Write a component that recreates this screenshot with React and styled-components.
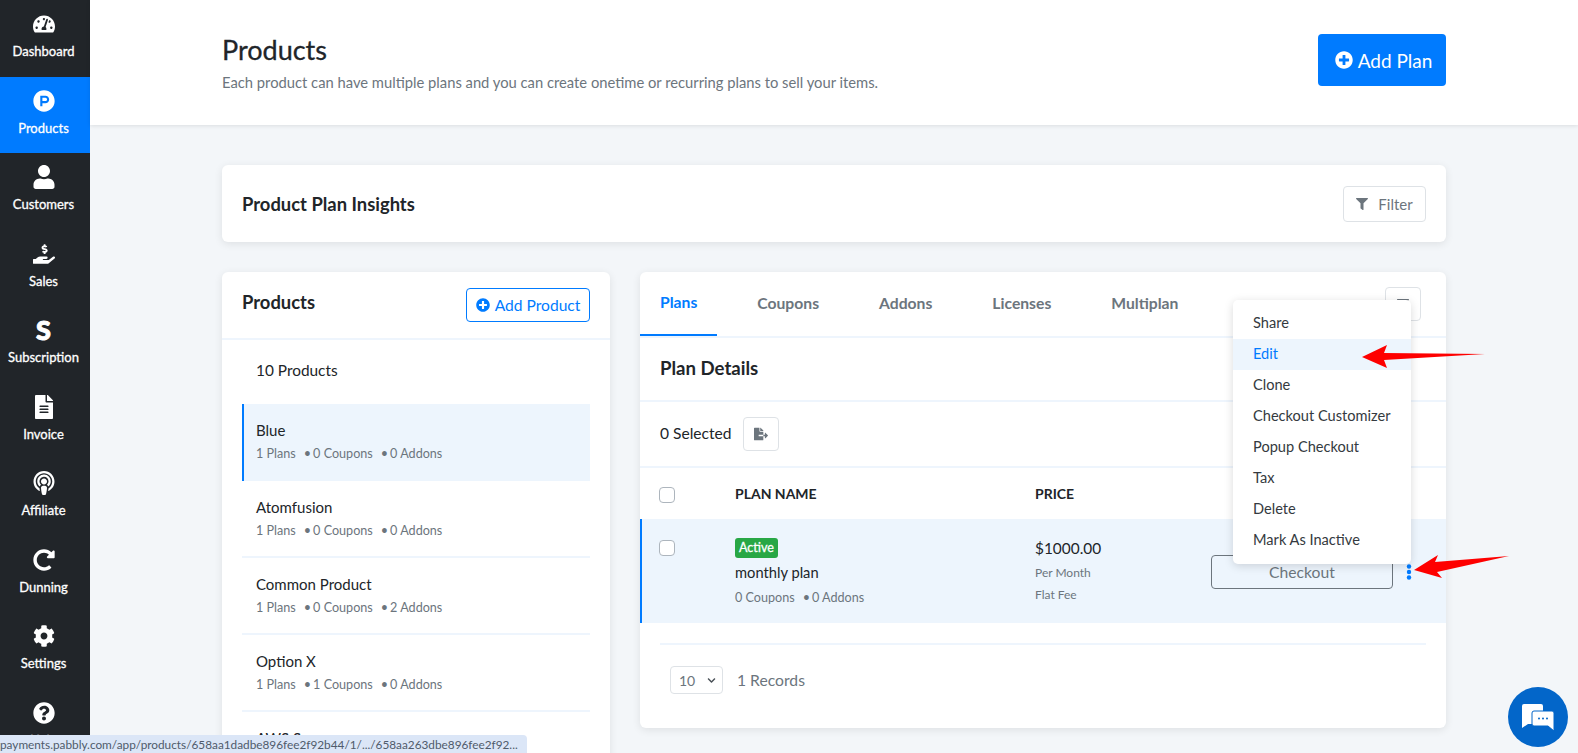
import React from "react";
import styled, { createGlobalStyle } from "styled-components";
import {
  FaTachometerAlt,
  FaProductHunt,
  FaUser,
  FaHandHoldingUsd,
  FaFileAlt,
  FaPodcast,
  FaRedoAlt,
  FaCog,
  FaQuestionCircle,
  FaPlusCircle,
  FaFilter,
  FaFileExport,
  FaChevronDown,
} from "react-icons/fa";

const GlobalStyle = createGlobalStyle`
  html, body {
    margin: 0;
    padding: 0;
    height: 100%;
    overflow: hidden;
    background: #f3f6f9;
    font-family: "Lato", "Liberation Sans", sans-serif;
    color: #212529;
  }
  * { box-sizing: border-box; }
`;

const Layout = styled.div`
  position: relative;
  display: flex;
  width: 1578px;
  height: 753px;
  overflow: hidden;
`;

const Sidebar = styled.nav`
  flex: 0 0 90px;
  height: 100%;
  background: #212529;
  display: flex;
  flex-direction: column;
`;

const NavItem = styled.div`
  flex: 0 0 76.5px;
  display: flex;
  flex-direction: column;
  align-items: center;
  padding: 12px 3px 0 0;
  gap: 7px;
  color: #fff;
  font-size: 13px;
  -webkit-text-stroke: 0.3px #fff;
  background: ${(p) => (p.$active ? "#007bff" : "transparent")};
  svg { font-size: 22px; height: 24px; }
`;

const SubscriptionGlyph = styled.span`
  font-size: 27px;
  line-height: 24px;
  height: 24px;
  font-weight: 900;
  -webkit-text-stroke: 1px #fff;
`;

const Main = styled.main`
  flex: 1;
  min-width: 0;
  display: flex;
  flex-direction: column;
`;

const PageHeader = styled.header`
  flex: 0 0 125px;
  background: #fff;
  box-shadow: 0 1px 4px rgba(0, 0, 0, 0.1);
  padding: 34px 132px 0;
  display: flex;
  justify-content: space-between;
  align-items: flex-start;
`;

const PageTitle = styled.h1`
  margin: 0 0 7px;
  font-size: 27px;
  line-height: 32px;
  font-weight: 400;
  -webkit-text-stroke: 0.3px #212529;
`;

const PageSub = styled.p`
  margin: 0;
  font-size: 14.75px;
  line-height: 18px;
  color: #6c757d;
`;

const PrimaryButton = styled.button`
  width: 128px;
  height: 52px;
  padding-right: 3px;
  border: 0;
  border-radius: 4px;
  background: #007bff;
  color: #fff;
  font: 400 19px "Lato", sans-serif;
  display: flex;
  align-items: center;
  justify-content: center;
  gap: 5px;
`;

const Content = styled.div`
  padding: 40px 132px 0;
  display: flex;
  flex-direction: column;
  gap: 30px;
`;

const Card = styled.section`
  background: #fff;
  border-radius: 6px;
  box-shadow: 0 2px 8px rgba(0, 0, 0, 0.09);
`;

const InsightsCard = styled(Card)`
  height: 77px;
  padding: 0 20px;
  display: flex;
  align-items: center;
  justify-content: space-between;
`;

const CardTitle = styled.h2`
  margin: 0;
  font-size: 18.4px;
  font-weight: 700;
`;

const OutlineButton = styled.button`
  width: 83px;
  height: 36px;
  background: #fff;
  border: 1px solid #dee2e6;
  border-radius: 4px;
  color: #6c757d;
  font: 400 15px "Lato", sans-serif;
  display: flex;
  align-items: center;
  justify-content: center;
  gap: 10px;
`;

const Columns = styled.div`
  display: grid;
  grid-template-columns: 388px 806px;
  gap: 30px;
  align-items: start;
`;

const ProductsCard = styled(Card)`
  height: 520px;
  overflow: hidden;
`;

const ProductsHead = styled.div`
  height: 68px;
  border-bottom: 2px solid #eef5fd;
  padding: 16px 20px 0;
  display: flex;
  justify-content: space-between;
  align-items: flex-start;
  h2 { font-size: 18.4px; line-height: 29px; margin: 0; font-weight: 700; }
`;

const AddProductButton = styled.button`
  width: 124px;
  height: 34px;
  padding-bottom: 2px;
  background: #fff;
  border: 1px solid #007bff;
  border-radius: 4px;
  color: #007bff;
  font: 400 15.6px "Lato", sans-serif;
  display: flex;
  align-items: center;
  justify-content: center;
  gap: 5px;
`;

const ProductsCount = styled.div`
  padding: 0 0 4px 34px;
  height: 64px;
  display: flex;
  align-items: center;
  font-size: 15.4px;
`;

const ProductList = styled.div`
  margin: 0 20px;
`;

const ProductRow = styled.div`
  height: 77px;
  padding: 16px 12px 0 ${(p) => (p.$active ? "12px" : "14px")};
  background: ${(p) => (p.$active ? "#edf5fd" : "transparent")};
  border-left: ${(p) => (p.$active ? "2px solid #007bff" : "0")};
  border-bottom: ${(p) => (p.$active ? "0" : "2px solid #eef5fd")};
`;

const RowName = styled.div`
  font-size: 15px;
  line-height: 20px;
  margin-bottom: 5px;
`;

const Meta = styled.div`
  font-size: 12.6px;
  line-height: 18px;
  color: #6c757d;
  display: flex;
  gap: 8px;
`;

const Bullet = styled.span`
  &::before {
    content: "•";
    margin-right: 2px;
  }
`;

const PlansCard = styled(Card)`
  height: 456px;
  position: relative;
`;

const Tabs = styled.div`
  height: 66px;
  border-bottom: 2px solid #eef5fd;
  display: flex;
  padding-right: 25px;
`;

const Tab = styled.div`
  height: 64px;
  padding: 0 20px 2px;
  margin-right: 20px;
  display: flex;
  align-items: center;
  font-size: 15.7px;
  font-weight: 700;
  color: ${(p) => (p.$active ? "#007bff" : "#6c757d")};
  border-bottom: ${(p) => (p.$active ? "2px solid #007bff" : "0")};
`;

const IconBox = styled.div`
  width: 36px;
  height: 34px;
  border: 1px solid #dee2e6;
  border-radius: 4px;
  background: #fff;
  display: flex;
  align-items: center;
  justify-content: center;
  color: #6c757d;
  font-size: 14px;
`;

const TabAction = styled(IconBox)`
  margin: 15px 0 0 auto;
  svg { margin-top: 2px; }
`;

const DetailsRow = styled.div`
  height: 64px;
  padding: 0 20px 2px;
  display: flex;
  align-items: center;
  border-bottom: 2px solid #eef5fd;
  h2 { margin: 0; font-size: 18.6px; font-weight: 700; }
`;

const SelectedRow = styled.div`
  height: 66px;
  padding: 0 20px;
  display: flex;
  align-items: center;
  gap: 11px;
  border-bottom: 2px solid #eef5fd;
  font-size: 15.6px;
`;

const SelectedCount = styled.span`
  margin-top: -3px;
`;

const PlanGrid = styled.div`
  display: grid;
  grid-template-columns: 75px 300px 176px 1fr;
  padding-left: 20px;
`;

const HeadRow = styled(PlanGrid)`
  height: 51px;
  align-items: center;
  font-size: 14px;
  font-weight: 700;
`;

const PlanRow = styled(PlanGrid)`
  height: 104px;
  background: #edf5fd;
  padding-left: 18px;
  border-left: 2px solid #007bff;
  padding-top: 17px;
`;

const CheckBox = styled.span`
  display: block;
  width: 16px;
  height: 16px;
  margin: ${(p) => (p.$row ? "4px 0 0 -1px" : "2px 0 0 -1px")};
  background: #fff;
  border: 1px solid #adb5bd;
  border-radius: 4px;
`;

const StatusBadge = styled.span`
  display: inline-block;
  height: 20px;
  line-height: 20px;
  padding: 0 4px;
  border-radius: 3px;
  background: #28a745;
  color: #fff;
  font-size: 12.5px;
  margin-bottom: 4px;
  -webkit-text-stroke: 0.3px #fff;
`;

const PlanName = styled.div`
  font-size: 14.7px;
  line-height: 20px;
  margin-bottom: 7px;
`;

const PriceCell = styled.div`
  padding-top: 2px;
`;

const Price = styled.div`
  font-size: 15.4px;
  line-height: 20px;
  margin-bottom: 4px;
`;

const PriceNote = styled.div`
  font-size: 12px;
  line-height: 22px;
  color: #6c757d;
`;

const CheckoutCell = styled.div`
  display: flex;
  align-items: flex-start;
  padding-top: 19px;
  gap: 13px;
`;

const CheckoutButton = styled.button`
  width: 182px;
  height: 34px;
  background: transparent;
  border: 1px solid #6c757d;
  border-radius: 4px;
  color: #6c757d;
  font: 400 15.7px "Lato", sans-serif;
`;

const Dots = styled.svg`
  flex: 0 0 6px;
  width: 6px;
  height: 16px;
  margin-top: 9px;
`;

const Footer = styled.div`
  margin: 20px 20px 0;
  border-top: 2px solid #eef5fd;
  padding: 21px 10px 0;
  display: flex;
  align-items: center;
  gap: 14px;
  color: #6c757d;
  font-size: 15.7px;
`;

const PageSize = styled.div`
  width: 53px;
  height: 28px;
  border: 1px solid #dee2e6;
  border-radius: 4px;
  padding: 0 6px 0 8px;
  display: flex;
  align-items: center;
  justify-content: space-between;
  font-size: 14px;
  svg { font-size: 9px; color: #495057; }
`;

const ActionMenu = styled.ul`
  position: absolute;
  left: 1233px;
  top: 300px;
  width: 178px;
  margin: 0;
  padding: 8px 0;
  list-style: none;
  background: #fff;
  border-radius: 5px;
  box-shadow: 0 2px 10px rgba(0, 0, 0, 0.15);
`;

const MenuItem = styled.li`
  height: 31px;
  line-height: 30px;
  padding-left: 20px;
  font-size: 14.6px;
  color: ${(p) => (p.$active ? "#007bff" : "#343a40")};
  background: ${(p) => (p.$active ? "#edf5fd" : "transparent")};
`;

const ArrowLayer = styled.svg`
  position: absolute;
  left: 0;
  top: 0;
  width: 1578px;
  height: 753px;
  pointer-events: none;
`;

const StatusBar = styled.div`
  position: absolute;
  left: 0;
  bottom: 0;
  width: 527px;
  height: 18px;
  padding-top: 1px;
  background: #dbe6f7;
  border-top-right-radius: 4px;
  font-size: 11.8px;
  line-height: 17px;
  color: #4f5b6b;
  white-space: nowrap;
  overflow: hidden;
`;

const ChatBubble = styled.div`
  position: absolute;
  left: 1508px;
  top: 687px;
  width: 60px;
  height: 60px;
  border-radius: 50%;
  background: #0366c9;
  display: flex;
  align-items: center;
  justify-content: center;
`;

const navItems = [
  { label: "Dashboard", icon: <FaTachometerAlt /> },
  { label: "Products", icon: <FaProductHunt />, active: true },
  { label: "Customers", icon: <FaUser /> },
  { label: "Sales", icon: <FaHandHoldingUsd /> },
  { label: "Subscription", icon: <SubscriptionGlyph>S</SubscriptionGlyph> },
  { label: "Invoice", icon: <FaFileAlt /> },
  { label: "Affiliate", icon: <FaPodcast /> },
  { label: "Dunning", icon: <FaRedoAlt /> },
  { label: "Settings", icon: <FaCog /> },
  { label: "Help", icon: <FaQuestionCircle /> },
];

const products = [
  { name: "Blue", plans: 1, coupons: 0, addons: 0, active: true },
  { name: "Atomfusion", plans: 1, coupons: 0, addons: 0 },
  { name: "Common Product", plans: 1, coupons: 0, addons: 2 },
  { name: "Option X", plans: 1, coupons: 1, addons: 0 },
  { name: "AWS S", plans: 1, coupons: 0, addons: 0 },
];

const menuItems = [
  "Share",
  "Edit",
  "Clone",
  "Checkout Customizer",
  "Popup Checkout",
  "Tax",
  "Delete",
  "Mark As Inactive",
];

export default function App() {
  return (
    <Layout>
      <GlobalStyle />
      <Sidebar>
        {navItems.map(({ label, icon, active }) => (
          <NavItem key={label} $active={active}>
            {icon}
            {label}
          </NavItem>
        ))}
      </Sidebar>

      <Main>
        <PageHeader>
          <div>
            <PageTitle>Products</PageTitle>
            <PageSub>
              Each product can have multiple plans and you can create onetime or
              recurring plans to sell your items.
            </PageSub>
          </div>
          <PrimaryButton>
            <FaPlusCircle size={18} />
            Add Plan
          </PrimaryButton>
        </PageHeader>

        <Content>
          <InsightsCard>
            <CardTitle>Product Plan Insights</CardTitle>
            <OutlineButton>
              <FaFilter size={12} />
              Filter
            </OutlineButton>
          </InsightsCard>

          <Columns>
            <ProductsCard>
              <ProductsHead>
                <h2>Products</h2>
                <AddProductButton>
                  <FaPlusCircle size={14} />
                  Add Product
                </AddProductButton>
              </ProductsHead>
              <ProductsCount>10 Products</ProductsCount>
              <ProductList>
                {products.map((p) => (
                  <ProductRow key={p.name} $active={p.active}>
                    <RowName>{p.name}</RowName>
                    <Meta>
                      <span>{p.plans} Plans</span>
                      <Bullet>{p.coupons} Coupons</Bullet>
                      <Bullet>{p.addons} Addons</Bullet>
                    </Meta>
                  </ProductRow>
                ))}
              </ProductList>
            </ProductsCard>

            <PlansCard>
              <Tabs>
                <Tab $active>Plans</Tab>
                <Tab>Coupons</Tab>
                <Tab>Addons</Tab>
                <Tab>Licenses</Tab>
                <Tab>Multiplan</Tab>
                <TabAction>
                  <FaFilter size={12} />
                </TabAction>
              </Tabs>
              <DetailsRow>
                <h2>Plan Details</h2>
              </DetailsRow>
              <SelectedRow>
                <SelectedCount>0 Selected</SelectedCount>
                <IconBox>
                  <FaFileExport />
                </IconBox>
              </SelectedRow>
              <HeadRow>
                <CheckBox />
                <div>PLAN NAME</div>
                <div>PRICE</div>
              </HeadRow>
              <PlanRow>
                <CheckBox $row />
                <div>
                  <StatusBadge>Active</StatusBadge>
                  <PlanName>monthly plan</PlanName>
                  <Meta>
                    <span>0 Coupons</span>
                    <Bullet>0 Addons</Bullet>
                  </Meta>
                </div>
                <PriceCell>
                  <Price>$1000.00</Price>
                  <PriceNote>Per Month</PriceNote>
                  <PriceNote>Flat Fee</PriceNote>
                </PriceCell>
                <CheckoutCell>
                  <CheckoutButton>Checkout</CheckoutButton>
                  <Dots viewBox="0 0 6 16">
                    <circle cx="3" cy="2.5" r="2.2" fill="#007bff" />
                    <circle cx="3" cy="8" r="2.2" fill="#007bff" />
                    <circle cx="3" cy="13.5" r="2.2" fill="#007bff" />
                  </Dots>
                </CheckoutCell>
              </PlanRow>
              <Footer>
                <PageSize>
                  10
                  <FaChevronDown />
                </PageSize>
                1 Records
              </Footer>
            </PlansCard>
          </Columns>
        </Content>
      </Main>

      <ActionMenu>
        {menuItems.map((item) => (
          <MenuItem key={item} $active={item === "Edit"}>
            {item}
          </MenuItem>
        ))}
      </ActionMenu>

      <ArrowLayer viewBox="0 0 1578 753">
        <polygon
          points="1362,357 1387,345 1384,353 1485,354 1384,360 1387,368"
          fill="#fe0000"
        />
        <polygon
          points="1414,570 1438,555 1435,562 1509,556 1437,572 1442,578"
          fill="#fe0000"
        />
      </ArrowLayer>

      <StatusBar>
        payments.pabbly.com/app/products/658aa1dadbe896fee2f92b44/1/.../658aa263dbe896fee2f92...
      </StatusBar>

      <ChatBubble>
        <svg width="32" height="27" viewBox="0 0 32 27">
          <path
            d="M2 0h17a2 2 0 0 1 2 2v16a2 2 0 0 1-2 2H6l-6 4V2a2 2 0 0 1 2-2z"
            fill="#fff"
          />
          <path
            d="M12 7h18a2 2 0 0 1 2 2v18l-6-5H12a2 2 0 0 1-2-2V9a2 2 0 0 1 2-2z"
            fill="#fff"
            stroke="#0366c9"
            strokeWidth="1"
          />
          <circle cx="17" cy="14.5" r="1" fill="#0366c9" />
          <circle cx="21" cy="14.5" r="1" fill="#0366c9" />
          <circle cx="25" cy="14.5" r="1" fill="#0366c9" />
        </svg>
      </ChatBubble>
    </Layout>
  );
}
